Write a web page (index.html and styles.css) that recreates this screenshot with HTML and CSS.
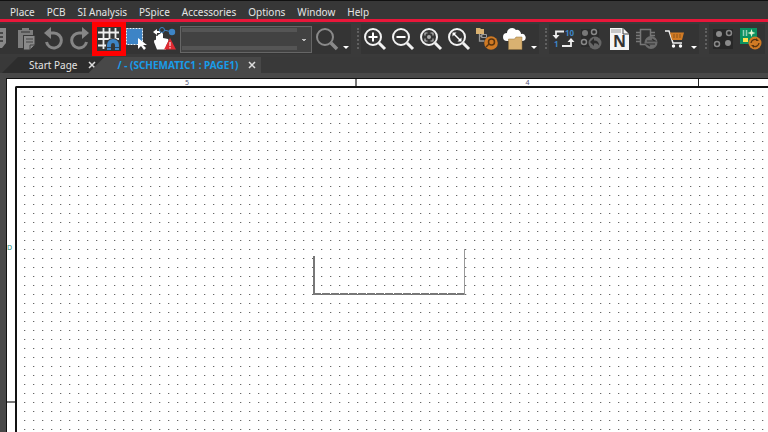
FILE: index.html
```
<!doctype html>
<html lang="en">
	<head>
		<meta charset="utf-8">
		<title>Schematic Editor</title>
		<meta name="viewport" content="width=device-width, initial-scale=1">
		<link rel="stylesheet" href="styles.css">
	</head>

	<body>
		<nav class="menu">
			<button>Place</button>
			<button>PCB</button>
			<button>SI Analysis</button>
			<button>PSpice</button>
			<button>Accessories</button>
			<button>Options</button>
			<button>Window</button>
			<button>Help</button>
		</nav>

		<div class="toolbar">
			<div class="group first">
				<button class="tool" aria-label="Copy">
					<svg viewBox="0 0 28 28"><path d="M8 3h15v15l-4 5H8z" fill="#888"/><path d="M8 8h12M8 12h12M8 16h12" stroke="#333" stroke-width="1.5"/></svg>
				</button>
				<button class="tool" aria-label="Paste">
					<svg viewBox="0 0 28 28"><path d="M7 5h4V3h7v2h4v5H12v13H7z" fill="#7d7d7d"/><path d="M10 7h9" stroke="#333"/><path d="M12.5 10.500H24V20l-5 5h-6.5z" fill="#8a8a8a" stroke="#383838"/><path d="M15 14h7M15 17h7" stroke="#444"/><path d="M19 25v-5h5" fill="none" stroke="#444"/></svg>
				</button>
				<button class="tool" aria-label="Undo">
					<svg viewBox="0 0 28 28"><path d="M11 8h4a7.5 7.5 0 1 1-7.5 9" fill="none" stroke="#858585" stroke-width="3"/><path d="M5 8l7-6v12z" fill="#858585"/></svg>
				</button>
				<button class="tool" aria-label="Redo">
					<svg viewBox="0 0 28 28"><path d="M16 8h-4a7.5 7.5 0 1 0 7.5 9" fill="none" stroke="#858585" stroke-width="3"/><path d="M22 8l-7-6v12z" fill="#858585"/></svg>
				</button>
				<button class="tool marked" aria-label="Snap to grid">
					<svg viewBox="0 0 28 28"><path d="M8.500 3v21M14.500 3v21M20.500 3v12M3 7.500h21M3 14h21M3 20.500h10" stroke="#eee" stroke-width="1.8"/><path d="M11 25v-5a7 7 0 0 1 14 0v5z" fill="#373737"/><path d="M14 25v-5a4 4 0 0 1 8 0v5" fill="none" stroke="#3d84c6" stroke-width="4"/><path d="M12 22.500h4M20 22.500h4" stroke="#26425c"/></svg>
				</button>
				<button class="tool" aria-label="Area select">
					<svg viewBox="0 0 28 28"><path d="M3.500 3.500h16v16h-16z" fill="#3d84c6" stroke="#e8f2fa" stroke-dasharray="2 1"/><path d="M15 13v11l3-3 3 4 2-2-3-3h4z" fill="#fff"/></svg>
				</button>
				<button class="tool" aria-label="Drag connected object">
					<svg viewBox="0 0 28 28"><path d="M13 5l8 2" stroke="#3d84c6"/><path d="M2 7l4-3v2h3v2H6v2z" fill="#fff"/><circle cx="11" cy="5" r="2.5" fill="#333" stroke="#3d84c6"/><circle cx="21" cy="7" r="3.2" fill="#3d84c6"/><path d="M9 9q1.500-3 3 0v4l5 1q1 1 0 3l-2 4v3.500H6L3 17q0-3 2-2V11q1-1 2 0v-1q1-1 2-1z" fill="#fff"/><path d="M19 13l6 11.500H13z" fill="#e02a32"/><path d="M19 17v4M19 22v1.500" stroke="#fff"/></svg>
				</button>
				<select class="parts" aria-label="Part"><option></option></select>
				<button class="tool" aria-label="Find">
					<svg viewBox="0 0 28 28"><circle cx="12" cy="12" r="8" fill="none" stroke="#8a8a8a" stroke-width="2"/><path d="M18 18l6 6" stroke="#8a8a8a" stroke-width="3.5"/></svg>
				</button>
				<button class="more" aria-label="More find tools"></button>
			</div>

			<div class="group">
				<button class="tool" aria-label="Zoom in">
					<svg viewBox="0 0 28 28"><circle cx="12" cy="12" r="8" class="lens"/><path d="M18 18l6 6" class="handle"/><path d="M7.500 12h9M12 7.500v9" stroke="#fff" stroke-width="2"/></svg>
				</button>
				<button class="tool" aria-label="Zoom out">
					<svg viewBox="0 0 28 28"><circle cx="12" cy="12" r="8" class="lens"/><path d="M18 18l6 6" class="handle"/><path d="M7.500 12h9" stroke="#fff" stroke-width="2"/></svg>
				</button>
				<button class="tool" aria-label="Zoom to fit">
					<svg viewBox="0 0 28 28"><circle cx="12" cy="12" r="8" class="lens"/><path d="M18 18l6 6" class="handle"/><circle cx="12" cy="12" r="2" fill="#aaa"/><path d="M8 10.500V8h2.500M13.500 8H16v2.500M16 13.500V16h-2.500M10.500 16H8v-2.500" fill="none" stroke="#bbb" stroke-width="1.2"/></svg>
				</button>
				<button class="tool" aria-label="Zoom to selection">
					<svg viewBox="0 0 28 28"><circle cx="12" cy="12" r="8" class="lens"/><path d="M18 18l6 6" class="handle"/><path d="M9 9l6 6" stroke="#fff" stroke-width="1.5"/><path d="M7.500 7.500h4l-4 4zM16.500 16.500h-4l4-4z" fill="#fff"/></svg>
				</button>
				<button class="tool" aria-label="Browse hierarchy">
					<svg viewBox="0 0 28 28"><path d="M3 3h4l1 1h3v5H3z" fill="#d9b171"/><path d="M6.500 9v7h5M6.500 11h3" fill="none" stroke="#999" stroke-width="1.3"/><path d="M8.500 9.500h5v3h-5z" fill="none" stroke="#999"/><circle cx="18" cy="18" r="6.800" fill="#d07a24"/><circle cx="18.500" cy="17" r="3" fill="none" stroke="#5a3510" stroke-width="1.5"/><path d="M16 19l-3 3" stroke="#5a3510" stroke-width="1.5"/></svg>
				</button>
				<button class="tool" aria-label="Cloud library">
					<svg viewBox="0 0 28 28"><path d="M6 16a4 4 0 0 1 0-8 5 5 0 0 1 9-3 4 4 0 0 1 5 4 3.500 3.500 0 0 1 2 7z" fill="#fff"/><path d="M7.500 24.500V14h6l1.500-2h6v12.500z" fill="#d9b171" stroke="#92723e" stroke-width=".5"/></svg>
				</button>
				<button class="more" aria-label="More zoom tools"></button>
			</div>

			<div class="group">
				<button class="tool" aria-label="Annotate">
					<svg viewBox="0 0 28 28"><path d="M15 6.500H7V11M13 21h9v-5" fill="none" stroke="#eee" stroke-width="1.8"/><path d="M3.500 10h7L7 14zM18.500 17h7L22 13z" fill="#eee"/><text x="16" y="11" class="digits">10</text><text x="5" y="22" class="digits">1</text></svg>
				</button>
				<button class="tool" aria-label="Back annotate">
					<svg viewBox="0 0 28 28"><path d="M4 4h18v18H4z" fill="#2b2b2b"/><circle cx="8" cy="8" r="3" fill="#777"/><circle cx="17" cy="7" r="2.5" class="pad"/><circle cx="7" cy="17" r="2.5" class="pad"/><circle cx="18" cy="18" r="6.500" fill="#666"/><path d="M13 17l4-4v2.500q5 0 5 5-2-3-5-2v2.500z" fill="#2b2b2b"/></svg>
				</button>
				<button class="tool" aria-label="Create netlist">
					<svg viewBox="0 0 28 28"><path d="M5 3h13l6 6v16H5z" fill="#f5f5f5"/><path d="M6 5h10M6 7h10" stroke="#999"/><path d="M18 3v6h6" fill="none" stroke="#444"/><text x="14.500" y="22" class="letter">N</text></svg>
				</button>
				<button class="tool" aria-label="Swap part">
					<svg viewBox="0 0 28 28"><path d="M7.500 4.500h10v15h-10z" fill="#333" stroke="#777" stroke-width="1.5"/><path d="M3 7.500h4M3 10.500h4M3 13.500h4M3 16.500h4M18 7.500h4M18 10.500h4" stroke="#777" stroke-width="1.3"/><circle cx="18" cy="17.500" r="6.500" fill="#6b6b6b"/><path d="M14 16h8l-3-2M22 19h-8l3 2" fill="none" stroke="#333" stroke-width="1.2"/></svg>
				</button>
				<button class="tool" aria-label="Order parts">
					<svg viewBox="0 0 28 28"><path d="M4 6h4l4 12h9" fill="none" stroke="#eee" stroke-width="1.5"/><path d="M9 7.500h14L21 15H11z" fill="#d07a24"/><path d="M13 9v4M16 9v4M19 9v4" stroke="#8d5219"/><circle cx="12.500" cy="21" r="1.700" fill="#fff"/><circle cx="19.500" cy="21" r="1.700" fill="#fff"/></svg>
				</button>
				<button class="more" aria-label="More part tools"></button>
			</div>

			<div class="group">
				<button class="tool" aria-label="Layout pads">
					<svg viewBox="0 0 28 28"><path d="M4 4h20v20H4z" fill="#282828"/><circle cx="10" cy="9" r="3" fill="#8a8a8a"/><circle cx="20" cy="8" r="2.5" class="pad"/><circle cx="8" cy="19" r="2.5" class="pad"/><circle cx="19" cy="18" r="3" fill="#8a8a8a"/></svg>
				</button>
				<button class="tool" aria-label="Update board">
					<svg viewBox="0 0 28 28"><path d="M3 3h17v16H3z" fill="#0b9160"/><path d="M6.500 5v6M9.500 5v6" stroke="#8fd0b6" stroke-width="1.5"/><path d="M14.500 4l1 3 3 1-3 1-1 3-1-3-3-1 3-1z" fill="#e4f6d0"/><path d="M6 13h5v4H6z" fill="#ffe14d"/><circle cx="18" cy="18" r="6.500" fill="#d07a24"/><path d="M14 18a4 4 0 0 1 6-3M22 18a4 4 0 0 1-6 3" fill="none" stroke="#5a3510" stroke-width="1.3"/><path d="M19 13l3 3h-3zM17 23l-3-3h3z" fill="#5a3510"/></svg>
				</button>
			</div>
		</div>

		<div class="tabs">
			<div class="tab">
				<button class="name">Start Page</button>
				<button class="close" aria-label="Close Start Page"><svg viewBox="0 0 8 8"><path d="M1 1l6 6M7 1L1 7"/></svg></button>
			</div>
			<div class="tab active">
				<button class="name">/ - (SCHEMATIC1 : PAGE1)</button>
				<button class="close" aria-label="Close schematic"><svg viewBox="0 0 8 8"><path d="M1 1l6 6M7 1L1 7"/></svg></button>
			</div>
		</div>

		<main class="workspace">
			<div class="page">
				<div class="ruler across">
					<span class="zone grey">5</span>
					<span class="zone">4</span>
				</div>
				<div class="ruler down">
					<span class="zone grey">D</span>
				</div>
				<svg class="sheet">
					<defs>
						<pattern id="grid" x="7" y="8" width="9" height="9" patternUnits="userSpaceOnUse">
							<path d="M0 0h1v1H0z" fill="#666"/>
							<path d="M1 0h1v1H1z" fill="#d4d4d4"/>
						</pattern>
					</defs>
					<rect width="100%" height="100%" fill="url(#grid)"/>
					<!-- part outline being drawn -->
					<path d="M297 168v38" stroke="#777" stroke-width="2"/>
					<path d="M296 206h152" stroke="#777" stroke-width="2" stroke-dasharray="8 1"/>
					<path d="M447.500 161v46" stroke="#999"/>
				</svg>
			</div>
		</main>
	</body>
</html>
```
FILE: styles.css
```
* {
	box-sizing: border-box;
}

body {
	margin: 0;
	min-height: 100vh;
	display: flex;
	flex-direction: column;
	overflow: hidden;
	background: #484848;
	color: #e4e4e4;
	font-family: "Noto Sans", "Open Sans", sans-serif;
	font-size: 10px;
}

button {
	padding: 0;
	border: 0;
	background: none;
	color: inherit;
	font: inherit;
	white-space: nowrap;
}

.menu {
	display: flex;
	gap: 12px;
	height: 22px;
	padding: 3px 10px 0;
	background: #373737;
	border-top: 1px solid #111;
	border-bottom: 3px solid #e8173a;
}

.toolbar {
	display: flex;
	gap: 10px;
	height: 35px;
	padding: 2px 0 3px;
	background: #3a3a3a;
}

.group {
	display: flex;
	flex: none;
	align-items: center;
	position: relative;
	background: #343434;
}

.first {
	margin-left: -17px;
}

.group + .group::before {
	content: "";
	position: absolute;
	left: -4px;
	top: 4px;
	height: 21px;
	border-left: 2px dotted #606060;
}

.tool {
	width: 28px;
	height: 28px;
}

.tool svg {
	display: block;
	width: 28px;
	height: 28px;
}

.marked {
	position: relative;
	outline: 5px solid #f00;
	outline-offset: -2px;
	z-index: 1;
}

.parts {
	width: 132px;
	height: 27px;
	margin: 0 1px;
	appearance: none;
	border: 1px solid #666;
	border-radius: 0;
	background-color: #424242;
	background-image:
		linear-gradient(#bbb, #bbb),
		linear-gradient(#bbb, #bbb),
		linear-gradient(#555, #555),
		linear-gradient(#555, #555);
	background-position: right 5px top 12px, right 6px top 13px, 1px 1px, 1px 19px;
	background-size: 4px 1px, 2px 1px, 115px 4px, 115px 4px;
	background-repeat: no-repeat;
}

.more {
	width: 10px;
	height: 28px;
	padding: 17px 0 0 2px;
}

.more::before {
	content: "";
	display: block;
	width: 0;
	border: 3px solid transparent;
	border-top-color: #fff;
	border-bottom: 0;
}

.lens {
	fill: none;
	stroke: #f2f2f2;
	stroke-width: 2;
}

.handle {
	stroke: #f2f2f2;
	stroke-width: 3;
}

.pad {
	fill: none;
	stroke: #888;
	stroke-width: 1.5;
}

.digits {
	fill: #3d84c6;
	font-size: 8px;
	font-weight: bold;
}

.letter {
	fill: #333;
	font-size: 16px;
	font-weight: bold;
	text-anchor: middle;
}

.tabs {
	display: flex;
	height: 16px;
	background: #393939;
}

.tab {
	display: flex;
	align-items: center;
	gap: 10px;
	padding: 0 11px 0 27px;
	margin-left: 2px;
	background: #2d2d2d;
	clip-path: polygon(16px 0, 100% 0, 100% 100%, 0 100%);
}

.active {
	margin-left: -18px;
	padding: 0 5px 0 29px;
	background: #484848;
	color: #189ce8;
	font-weight: bold;
}

.close svg {
	display: block;
	width: 8px;
	height: 8px;
	stroke: #ddd;
	stroke-width: 1.5;
}

.workspace {
	flex: 1;
	display: flex;
	padding: 5px 0 0 6px;
}

.page {
	flex: 1;
	display: grid;
	grid-template-columns: 8px 1fr;
	grid-template-rows: 7px 1fr;
	background: #fff;
	border: solid #111;
	border-width: 1px 0 0 1px;
	color: #557;
	font-size: 7px;
	line-height: 7px;
}

.ruler {
	display: flex;
}

.across {
	grid-column: 2;
}

.across .zone {
	width: 342px;
	border-right: 1px solid #222;
	text-align: center;
}

.down {
	grid-row: 2;
	flex-direction: column;
}

.down .zone {
	display: flex;
	align-items: center;
	height: 317px;
	padding-top: 8px;
	border-bottom: 2px solid #777;
	color: #2a8a7a;
}

.across .grey {
	padding-left: 4px;
	border-right: 2px solid #777;
}

.sheet {
	width: 100%;
	height: 100%;
	border: solid #111;
	border-width: 2px 0 0 2px;
	border-top-left-radius: 2px;
}
```
